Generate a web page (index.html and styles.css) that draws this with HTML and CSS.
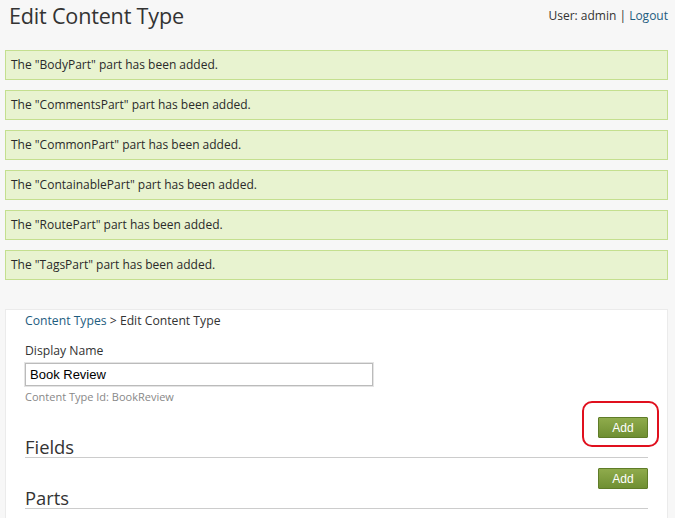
FILE: index.html
```html
<!DOCTYPE html>
<html>
<head>
<meta charset="utf-8">
<link rel="stylesheet" href="styles.css">
</head>
<body>
<div class="header">
  <h1 class="title">Edit Content Type</h1>
  <div class="user">User: admin | <a class="link" href="#">Logout</a></div>
</div>
<div class="messages">
  <div class="msg">The "BodyPart" part has been added.</div>
  <div class="msg">The "CommentsPart" part has been added.</div>
  <div class="msg">The "CommonPart" part has been added.</div>
  <div class="msg">The "ContainablePart" part has been added.</div>
  <div class="msg">The "RoutePart" part has been added.</div>
  <div class="msg">The "TagsPart" part has been added.</div>
</div>
<div class="panel">
  <div class="crumbs"><a class="link" href="#">Content Types</a> &gt; Edit Content Type</div>
  <label class="label">Display Name</label>
  <input class="input" type="text" value="Book Review">
  <div class="hint">Content Type Id: BookReview</div>
  <div class="section">
    <div class="actions"><span class="ring"></span><button class="btn">Add</button></div>
    <h2 class="heading">Fields</h2>
  </div>
  <div class="section">
    <div class="actions"><button class="btn">Add</button></div>
    <h2 class="heading">Parts</h2>
  </div>
</div>
</body>
</html>
```
FILE: styles.css
```css
html, body {
  margin: 0;
  padding: 0;
  background: #f7f7f7;
  font-family: "Open Sans", "Noto Sans", sans-serif;
  color: #333;
  overflow: hidden;
}
body {
  width: 675px;
  height: 518px;
}
.header {
  display: flex;
  justify-content: space-between;
  align-items: flex-start;
  padding: 0 7px 0 9px;
  height: 50px;
}
.title {
  margin: 0;
  font-weight: normal;
  font-size: 21.6px;
  line-height: 32px;
  color: #333;
  letter-spacing: -0.2px;
}
.user {
  font-size: 12px;
  line-height: 16px;
  margin-top: 8px;
  color: #333;
}
.link {
  color: #1e5d7f;
  text-decoration: none;
}
.messages {
  display: flex;
  flex-direction: column;
  gap: 10px;
  padding: 0 7px 0 5px;
}
.msg {
  height: 28px;
  line-height: 28px;
  background: #e8f3d0;
  border: 1px solid #c4df8f;
  padding: 0 5px;
  font-size: 12px;
  color: #2a2a2a;
}
.panel {
  margin: 29px 7px 0 5px;
  background: #fff;
  border: 1px solid #ebebeb;
  border-bottom: none;
  padding: 3px 19px 0 19px;
  height: 220px;
  position: relative;
}
.crumbs {
  font-size: 12.2px;
  line-height: 16px;
}
.label {
  display: block;
  margin-top: 14px;
  font-size: 12.2px;
  line-height: 16px;
}
.input {
  display: block;
  box-sizing: border-box;
  margin-top: 4px;
  width: 348px;
  height: 23px;
  border: 1px solid #bbb;
  box-shadow: 0 0 0 1px #e4e4e4;
  padding: 0 4px;
  font-family: "Liberation Sans", Arial, sans-serif;
  font-size: 13px;
  color: #000;
  outline: none;
}
.hint {
  margin-top: 3px;
  font-size: 11px;
  line-height: 16px;
  color: #888;
}
.section {
  margin-top: 12px;
}
.section + .section {
  margin-top: 10px;
}
.actions {
  display: flex;
  justify-content: flex-end;
  position: relative;
  height: 21px;
}
.btn {
  width: 50px;
  height: 21px;
  box-sizing: border-box;
  border: 1px solid #5f7c28;
  background: linear-gradient(#8fab4c, #6f8f32);
  color: #fff;
  font-family: "Liberation Sans", Arial, sans-serif;
  font-size: 12px;
  padding: 0;
  border-radius: 1px;
}
.ring {
  position: absolute;
  right: -11px;
  top: -16px;
  width: 77px;
  height: 46px;
  box-sizing: border-box;
  border: 2px solid #e0101e;
  border-radius: 10px;
}
.heading {
  margin: -3px 0 0;
  padding-top: 2px;
  font-weight: normal;
  font-size: 18.4px;
  line-height: 20px;
  color: #333;
  border-bottom: 1px solid #ccc;
}
```
